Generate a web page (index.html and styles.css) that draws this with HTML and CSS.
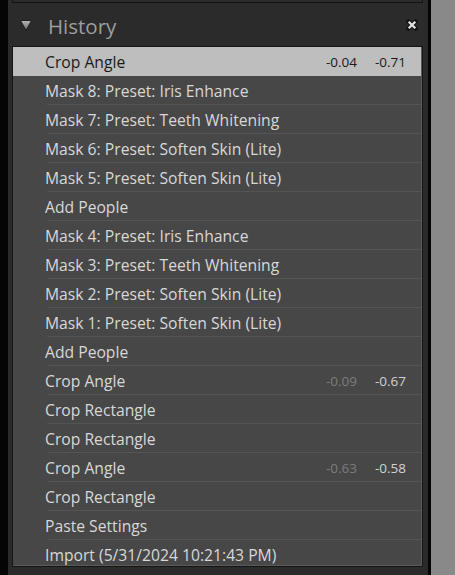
FILE: index.html
```html
<!DOCTYPE html>
<html>
<head>
<meta charset="utf-8">
<link rel="stylesheet" href="styles.css">
</head>
<body>
<div class="app">
  <div class="edge-left"></div>
  <div class="panel">
    <div class="prev-box"></div>
    <div class="header">
      <svg class="tri" width="12" height="11" viewBox="0 0 12 11">
        <defs>
          <linearGradient id="tg" x1="0" y1="0" x2="0" y2="1">
            <stop offset="0" stop-color="#b4b4b4"/>
            <stop offset="1" stop-color="#6a6a6a"/>
          </linearGradient>
        </defs>
        <polygon points="0.5,0.5 11.5,0.5 6,10.5" fill="url(#tg)" stroke="#1e1e1e" stroke-width="1"/>
      </svg>
      <span class="title">History</span>
      <svg class="close" width="12" height="12" viewBox="0 0 12 12">
        <path d="M2.5 2.5 L9.5 9.5 M9.5 2.5 L2.5 9.5" stroke="#141414" stroke-width="4.2" stroke-linecap="square"/>
        <path d="M2.7 2.7 L9.3 9.3 M9.3 2.7 L2.7 9.3" stroke="#e2e2e2" stroke-width="2.3" stroke-linecap="butt"/>
      </svg>
    </div>
    <div class="list">
      <div class="rows">
        <div class="row sel"><span class="label">Crop Angle</span><span class="n1">-0.04</span><span class="n2">-0.71</span></div>
        <div class="row"><span class="label">Mask 8: Preset: Iris Enhance</span></div>
        <div class="row"><span class="label">Mask 7: Preset: Teeth Whitening</span></div>
        <div class="row"><span class="label">Mask 6: Preset: Soften Skin (Lite)</span></div>
        <div class="row"><span class="label">Mask 5: Preset: Soften Skin (Lite)</span></div>
        <div class="row"><span class="label">Add People</span></div>
        <div class="row"><span class="label">Mask 4: Preset: Iris Enhance</span></div>
        <div class="row"><span class="label">Mask 3: Preset: Teeth Whitening</span></div>
        <div class="row"><span class="label">Mask 2: Preset: Soften Skin (Lite)</span></div>
        <div class="row"><span class="label">Mask 1: Preset: Soften Skin (Lite)</span></div>
        <div class="row"><span class="label">Add People</span></div>
        <div class="row"><span class="label">Crop Angle</span><span class="n1">-0.09</span><span class="n2">-0.67</span></div>
        <div class="row"><span class="label">Crop Rectangle</span></div>
        <div class="row"><span class="label">Crop Rectangle</span></div>
        <div class="row"><span class="label">Crop Angle</span><span class="n1">-0.63</span><span class="n2">-0.58</span></div>
        <div class="row"><span class="label">Crop Rectangle</span></div>
        <div class="row"><span class="label">Paste Settings</span></div>
        <div class="row"><span class="label">Import (5/31/2024 10:21:43 PM)</span></div>
      </div>
    </div>
  </div>
  <div class="gutter"></div>
  <div class="side"></div>
</div>
</body>
</html>
```

FILE: styles.css
```css
* { box-sizing: border-box; }
html, body {
  margin: 0;
  padding: 0;
  background: #000;
}
body {
  font-family: "Open Sans", "Noto Sans", sans-serif;
}
.app {
  display: flex;
  width: 455px;
  height: 575px;
  overflow: hidden;
}
.edge-left {
  width: 8px;
  background: #050505;
  flex: none;
}
.panel {
  width: 420px;
  flex: none;
  background: #2b2b2b;
  padding: 0 5px 0 4px;
  display: flex;
  flex-direction: column;
}
.gutter {
  width: 3px;
  flex: none;
  background: #050505;
}
.side {
  flex: 1;
  background: #898989;
}
.prev-box {
  width: 411px;
  height: 3px;
  border: 1px solid #141414;
  border-top: none;
  flex: none;
}
.header {
  height: 43px;
  flex: none;
  display: flex;
  align-items: center;
  padding-left: 8px;
  padding-top: 3px;
}
.tri {
  display: block;
  margin-top: -1px;
}
.title {
  margin-left: 16px;
  font-size: 20.5px;
  color: #9e9e9e;
  line-height: 1;
}
.close {
  display: block;
  margin-left: auto;
  margin-right: 5px;
  margin-top: -3px;
}
.list {
  width: 411px;
  border: 1px solid #151515;
  flex: none;
}
.rows {
  height: 519px;
  overflow: hidden;
  background: #474747;
  border-right: 1px solid #5a5a5a;
  border-bottom: 1px solid #5a5a5a;
}
.row {
  height: 29px;
  display: flex;
  align-items: center;
  padding: 1px 15px 0 32px;
  font-size: 15.7px;
  color: #d8d8d8;
  background: linear-gradient(#545454, #545454) no-repeat 34px 100% / calc(100% - 34px) 1px, #474747;
}
.row.sel {
  background: #bebebe;
  color: #1a1a1a;
}
.label {
  flex: 1;
  white-space: nowrap;
}
.n1, .n2 {
  font-size: 13.5px;
  text-align: right;
}
.n1 {
  color: #7c7c7c;
}
.n2 {
  width: 49px;
  color: #d2d2d2;
}
.sel .n1, .sel .n2 {
  color: #1a1a1a;
}
```
